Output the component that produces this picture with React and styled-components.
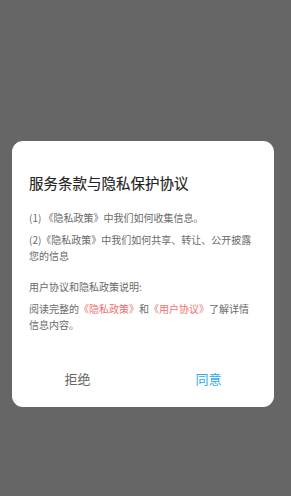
import React from "react";
import styled, { createGlobalStyle } from "styled-components";

const GlobalStyle = createGlobalStyle`
  html, body {
    margin: 0;
    padding: 0;
    background: #666666;
  }
  body {
    font-family: "Noto Sans CJK SC", "Noto Sans", sans-serif;
  }
`;

const App = () => {
  return (
    <Page>
      <GlobalStyle/>
      <Dialog>
        <Content>
          <Title>服务条款与隐私保护协议</Title>
          <Para>(1) 《隐私政策》中我们如何收集信息。</Para>
          <Para>(2)《隐私政策》中我们如何共享、转让、公开披露您的信息</Para>
          <Para spaced>用户协议和隐私政策说明:</Para>
          <Para>
            阅读完整的<Link>《隐私政策》</Link>和<Link>《用户协议》</Link>了解详情信息内容。
          </Para>
        </Content>
        <Actions>
          <ActionButton>拒绝</ActionButton>
          <ActionButton primary>同意</ActionButton>
        </Actions>
      </Dialog>
    </Page>
  )
};

const Page = styled.div`
  min-height: 496px;
  padding-top: 141px;
  box-sizing: border-box;
  background: #666666;
`;

const Dialog = styled.div`
  position: relative;
  width: 262px;
  margin-left: 12px;
  padding-bottom: 7px;
  background: #ffffff;
  border-radius: 11px;

  &::after {
    content: "";
    position: absolute;
    left: 122px;
    bottom: -6px;
    width: 30px;
    height: 6px;
    border-radius: 50%;
    background: rgba(60, 55, 130, 0.45);
    filter: blur(3px);
    z-index: -1;
  }
`;

const Content = styled.div`
  padding: 32px 17px 0 17px;
`;

const Title = styled.h2`
  margin: 0 0 17px;
  font-size: 14.5px;
  line-height: 20px;
  font-weight: 400;
  color: #222222;
  -webkit-text-stroke: 0.15px #222222;
`;

const Para = styled.p`
  margin: ${p => (p.spaced ? "15px" : "6px")} 0 0;
  font-size: 10px;
  line-height: 16px;
  color: #6a6a6a;

  &:first-of-type {
    margin-top: 0;
  }
`;

const Link = styled.span`
  color: #ef6f70;
`;

const Actions = styled.div`
  display: flex;
  margin-top: 23px;
  height: 44px;
`;

const ActionButton = styled.button`
  flex: 1;
  border: none;
  background: none;
  padding: 0;
  font-family: "Noto Sans CJK SC", "Noto Sans", sans-serif;
  font-size: 13px;
  color: ${p => (p.primary ? "#2fa9ec" : "#666666")};
  cursor: pointer;
`;

export default App;
